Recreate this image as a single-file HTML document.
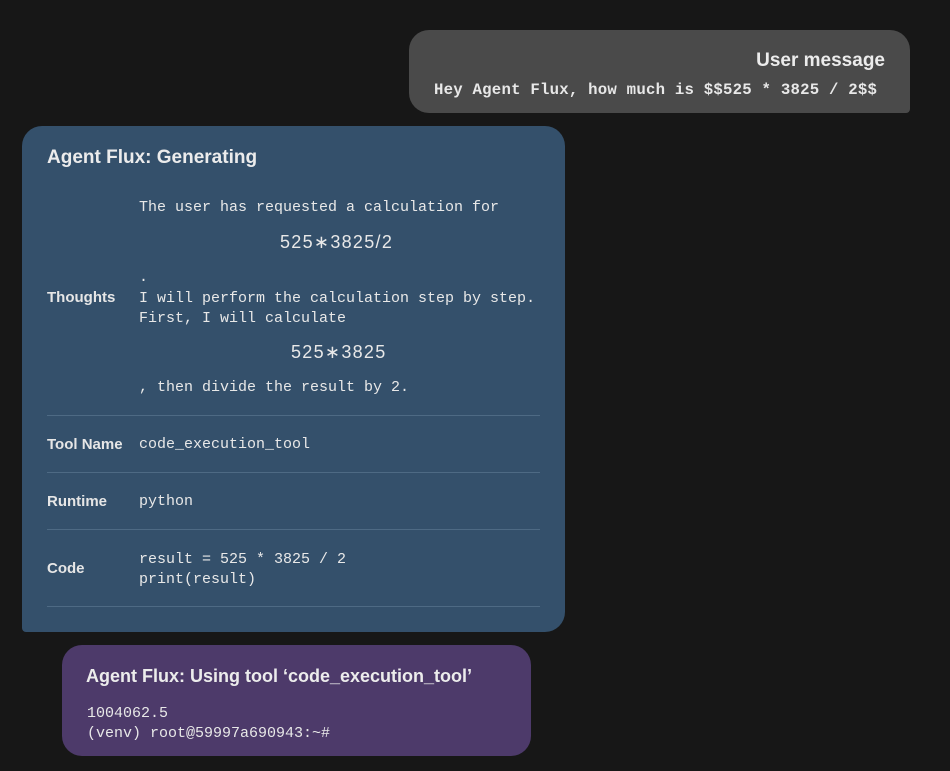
<!DOCTYPE html>
<html><head><style>
body{margin:0;background:#171717;width:950px;height:771px;position:relative;overflow:hidden;font-family:"Liberation Sans",sans-serif;color:#e6e6e6}
.a{position:absolute;white-space:pre}
.m{font-family:"Liberation Mono",monospace;font-size:15px;color:#e8e8e8}
.b{font-weight:bold}
.sep{position:absolute;left:47px;width:493px;height:1px;background:#4e6a84}
.x{font-family:'Liberation Sans',sans-serif;font-size:18px;letter-spacing:1.3px}
</style></head><body>
<div class="a" style="left:409px;top:30px;width:501px;height:83px;background:#4a4a4a;border-radius:20px 20px 4px 20px"></div>
<div class="a b" style="right:65px;top:50px;font-size:19px;color:#ececec">User message</div>
<div class="a m b" style="left:434px;top:81px;font-size:15.7px;letter-spacing:0.22px">Hey Agent Flux, how much is $$525 * 3825 / 2$$</div>

<div class="a" style="left:22px;top:126px;width:543px;height:506px;background:#34506b;border-radius:20px 20px 20px 4px"></div>
<div class="a b" style="left:47px;top:147px;font-size:19px;color:#ececec">Agent Flux: Generating</div>
<div class="a m" style="left:139px;top:199px">The user has requested a calculation for</div>
<div class="a m x" style="left:280px;top:232px">525∗3825/2</div>
<div class="a m" style="left:139px;top:269px">.</div>
<div class="a b" style="left:47px;top:289px;font-size:15px">Thoughts</div>
<div class="a m" style="left:139px;top:289px;line-height:20px">I will perform the calculation step by step.
First, I will calculate</div>
<div class="a m x" style="left:291px;top:342px">525∗3825</div>
<div class="a m" style="left:139px;top:379px">, then divide the result by 2.</div>
<div class="sep" style="top:415px"></div>
<div class="a b" style="left:47px;top:436px;font-size:15px">Tool Name</div>
<div class="a m" style="left:139px;top:436px">code_execution_tool</div>
<div class="sep" style="top:472px"></div>
<div class="a b" style="left:47px;top:493px;font-size:15px">Runtime</div>
<div class="a m" style="left:139px;top:493px">python</div>
<div class="sep" style="top:529px"></div>
<div class="a b" style="left:47px;top:560px;font-size:15px">Code</div>
<div class="a m" style="left:139px;top:550px;line-height:20px">result = 525 * 3825 / 2
print(result)</div>
<div class="sep" style="top:606px"></div>

<div class="a" style="left:62px;top:645px;width:469px;height:111px;background:#4d3a6a;border-radius:20px"></div>
<div class="a b" style="left:86px;top:666px;font-size:18px;color:#ececec">Agent Flux: Using tool ‘code_execution_tool’</div>
<div class="a m" style="left:87px;top:704px;line-height:20px">1004062.5
(venv) root@59997a690943:~#</div>
</body></html>
